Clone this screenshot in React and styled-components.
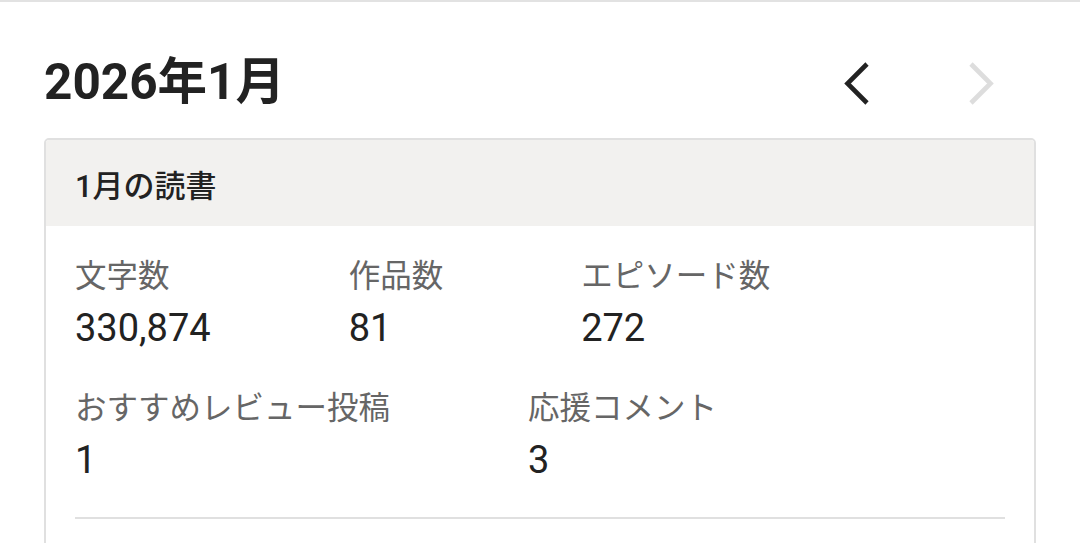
import React from 'react';
import styled, { createGlobalStyle } from 'styled-components';

const GlobalStyle = createGlobalStyle`
  html, body {
    margin: 0;
    padding: 0;
    background: #fff;
  }
  body {
    font-family: Roboto, "Noto Sans CJK JP", sans-serif;
    color: #222;
  }
`;

const Page = styled.div`
  border-top: 2px solid #e2e2e2;
  padding: 0 44px;
`;

const MonthBar = styled.div`
  display: flex;
  align-items: center;
  justify-content: space-between;
  height: 110px;
  padding-top: 26px;
`;

const MonthTitle = styled.h1`
  margin: 0;
  font-size: 49.5px;
  font-weight: 700;
  line-height: 1;
  color: #222;
`;

const Nav = styled.div`
  display: flex;
  align-items: center;
  gap: 75px;
  margin-right: 30px;
`;

const NavButton = styled.button`
  width: 50px;
  height: 50px;
  padding: 0;
  border: none;
  background: none;
  display: flex;
  align-items: center;
  justify-content: center;
  color: ${(p) => (p.disabled ? '#dddddd' : '#222222')};
  cursor: ${(p) => (p.disabled ? 'default' : 'pointer')};
`;

const Card = styled.section`
  border: 2px solid #e0e0e0;
  border-radius: 5px;
  overflow: hidden;
`;

const CardHeader = styled.div`
  background: #f2f1ef;
  height: 86px;
  display: flex;
  align-items: center;
  padding: 0 29px;
  font-size: 31px;
  font-weight: 500;
  color: #222;
`;

const CardBody = styled.div`
  padding: 27px 29px 60px;
`;

const StatsRow = styled.div`
  display: flex;
  gap: 138px;
  & + & {
    margin-top: 28px;
  }
`;

const Stat = styled.div`
  display: flex;
  flex-direction: column;
`;

const StatLabel = styled.div`
  font-size: 31.5px;
  line-height: 47px;
  color: #666;
`;

const StatValue = styled.div`
  font-size: 38px;
  line-height: 57px;
  color: #222;
`;

const Divider = styled.hr`
  margin: 28px 0 0;
  border: none;
  border-top: 2px solid #e0e0e0;
`;

const Chevron = ({ dir }) => (
  <svg width="25" height="43" viewBox="0 0 25 43" fill="none">
    <polyline
      points={dir === 'left' ? '23,2 3.5,21.5 23,41' : '2,2 21.5,21.5 2,41'}
      stroke="currentColor"
      strokeWidth="4.6"
      strokeLinejoin="miter"
    />
  </svg>
);

const rows = [
  [
    { label: '文字数', value: '330,874' },
    { label: '作品数', value: '81' },
    { label: 'エピソード数', value: '272' },
  ],
  [
    { label: 'おすすめレビュー投稿', value: '1' },
    { label: '応援コメント', value: '3' },
  ],
];

const App = () => (
  <>
    <GlobalStyle />
    <Page>
      <MonthBar>
        <MonthTitle>2026年1月</MonthTitle>
        <Nav>
          <NavButton aria-label="前の月">
            <Chevron dir="left" />
          </NavButton>
          <NavButton aria-label="次の月" disabled>
            <Chevron dir="right" />
          </NavButton>
        </Nav>
      </MonthBar>
      <Card>
        <CardHeader>1月の読書</CardHeader>
        <CardBody>
          {rows.map((row, i) => (
            <StatsRow key={i}>
              {row.map((s) => (
                <Stat key={s.label}>
                  <StatLabel>{s.label}</StatLabel>
                  <StatValue>{s.value}</StatValue>
                </Stat>
              ))}
            </StatsRow>
          ))}
          <Divider />
        </CardBody>
      </Card>
    </Page>
  </>
);

export default App;
